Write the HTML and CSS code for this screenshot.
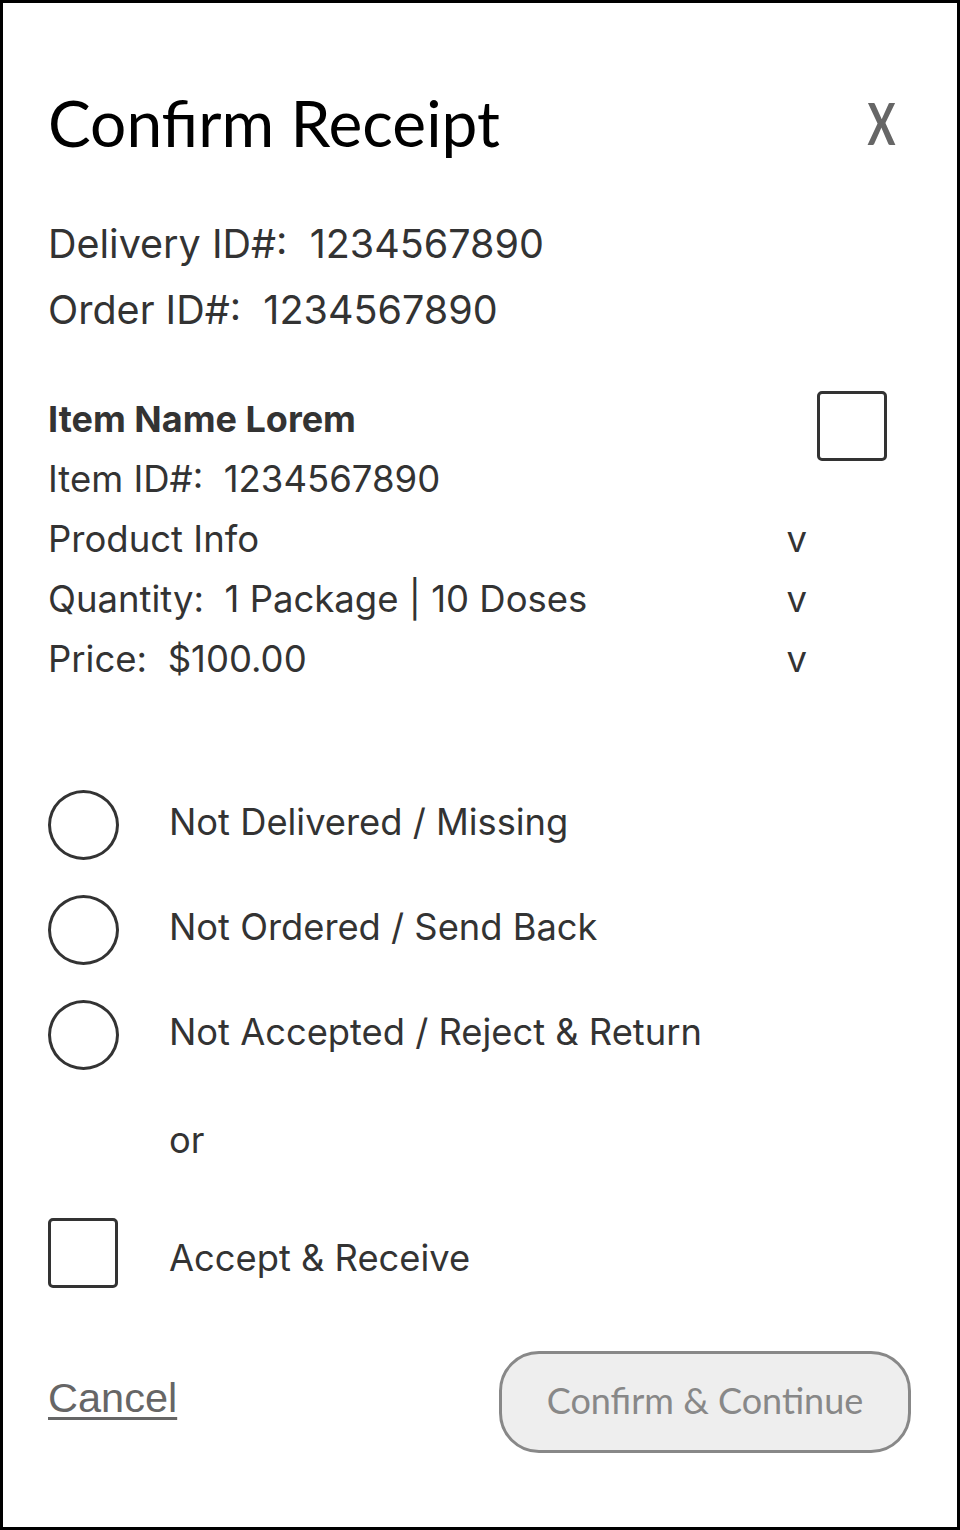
FILE: index.html
```html
<!DOCTYPE html>
<html lang="en">
<head>
<meta charset="utf-8">
<title>Confirm Receipt</title>
<link rel="stylesheet" href="styles.css">
</head>
<body>
<div class="modal">
  <div class="header">
    <h1 class="title">Confirm Receipt</h1>
    <span class="close">X</span>
  </div>

  <div class="ids">
    <div class="id-row">Delivery ID#:&nbsp; 1234567890</div>
    <div class="id-row">Order ID#:&nbsp; 1234567890</div>
  </div>

  <div class="item">
    <div class="item-rows">
      <div class="item-row item-name">Item Name Lorem</div>
      <div class="item-row">Item ID#:&nbsp; 1234567890</div>
      <div class="item-row"><span>Product Info</span><span class="chev">v</span></div>
      <div class="item-row"><span>Quantity:&nbsp; 1 Package | 10 Doses</span><span class="chev">v</span></div>
      <div class="item-row"><span>Price:&nbsp; $100.00</span><span class="chev">v</span></div>
    </div>
    <span class="box item-box"></span>
  </div>

  <div class="options">
    <div class="option"><span class="radio"></span><span class="opt-label">Not Delivered / Missing</span></div>
    <div class="option"><span class="radio"></span><span class="opt-label">Not Ordered / Send Back</span></div>
    <div class="option"><span class="radio"></span><span class="opt-label">Not Accepted / Reject &amp; Return</span></div>
    <div class="or">or</div>
    <div class="option"><span class="box"></span><span class="opt-label accept-label">Accept &amp; Receive</span></div>
  </div>

  <div class="footer">
    <a class="cancel">Cancel</a>
    <button class="confirm" type="button">Confirm &amp; Continue</button>
  </div>
</div>
</body>
</html>
```

FILE: styles.css
```css
html, body {
  margin: 0;
  padding: 0;
  background: #fff;
}

.modal {
  width: 960px;
  height: 1530px;
  box-sizing: border-box;
  border: 3px solid #000;
  padding: 0 46px 0 45px;
  display: flex;
  flex-direction: column;
  font-family: Inter, "Noto Sans", sans-serif;
  color: #333;
}

.header {
  display: flex;
  justify-content: space-between;
  align-items: center;
  margin-top: 80px;
  height: 80px;
}

.title {
  margin: 0;
  font-family: Lato, "Liberation Sans", sans-serif;
  font-weight: 400;
  font-size: 64px;
  line-height: 80px;
  color: #000;
}

.close {
  font-family: Lato, "Liberation Sans", sans-serif;
  font-weight: 700;
  font-size: 58px;
  line-height: 80px;
  color: #666;
  margin-right: 10px;
  transform: scaleX(0.72);
}

.ids {
  margin-top: 48px;
}

.id-row {
  font-size: 39.5px;
  line-height: 66px;
}

.item {
  display: flex;
  align-items: flex-start;
  margin-top: 46px;
}

.item-rows {
  width: 759px;
}

.item-row {
  display: flex;
  justify-content: space-between;
  font-size: 36.5px;
  line-height: 60px;
}

.item-name {
  font-weight: 700;
  font-size: 36px;
}

.box {
  display: block;
  width: 70px;
  height: 70px;
  box-sizing: border-box;
  border: 3px solid #333;
  border-radius: 5px;
  flex: none;
}

.item-box {
  margin-left: 10px;
  margin-top: 2px;
}

.options {
  margin-top: 101px;
  display: flex;
  flex-direction: column;
  gap: 35px;
}

.option {
  display: flex;
  align-items: center;
  height: 70px;
}

.radio {
  width: 71px;
  height: 70px;
  box-sizing: border-box;
  border: 3px solid #333;
  border-radius: 50%;
  flex: none;
}

.opt-label {
  margin-left: 50px;
  font-size: 36.3px;
  line-height: 70px;
  position: relative;
  top: -3px;
}

.accept-label {
  margin-left: 51px;
  top: 5px;
}

.or {
  padding-left: 121px;
  font-size: 36.3px;
  line-height: 70px;
  margin-bottom: 8px;
}

.footer {
  margin-top: 63px;
  display: flex;
  justify-content: space-between;
  align-items: center;
}

.cancel {
  font-family: "Liberation Sans", Arial, sans-serif;
  font-size: 41.5px;
  color: #666;
  text-decoration: underline;
  text-decoration-thickness: 3px;
  text-underline-offset: 5px;
  padding-bottom: 8px;
}

.confirm {
  width: 412px;
  height: 102px;
  box-sizing: border-box;
  border: 3px solid #888;
  border-radius: 40px;
  background: #eee;
  font-family: Lato, "Liberation Sans", sans-serif;
  font-size: 36px;
  color: #888;
  padding: 0 0 5px;
}
```
